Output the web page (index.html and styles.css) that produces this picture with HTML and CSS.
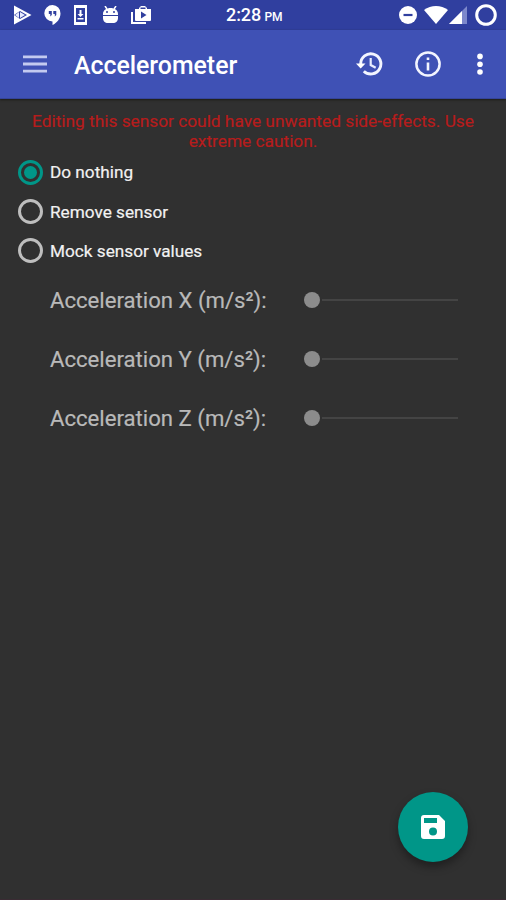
FILE: index.html
```html
<!DOCTYPE html>
<html lang="en">
<head>
<meta charset="utf-8">
<title>Accelerometer</title>
<link rel="stylesheet" href="styles.css">
</head>
<body>
<div class="screen">
  <header class="status">
    <div class="notifications">
      <svg width="19" height="20" viewBox="0 0 19 20"><path d="M1 0.5 18.500 10 1 19.500z" fill="#fff"/><path d="M1 10 7 6l7 4-7 4z" fill="#303f9f"/><path d="M2 10l4-3v6zM7 7l5 3-5 3z" fill="#e8ebff"/></svg>
      <svg width="17" height="20" viewBox="0 0 17 20"><path d="M8.500 0a8.200 8.200 0 0 0 0 16.400V20c4.500-2 8-6.500 8-11.500A8.200 8.200 0 0 0 8.500 0z" fill="#fff"/><path d="M4.800 6h3v4l-1.500 1.500V9H4.800zM9.300 6h3v4l-1.500 1.500V9H9.300z" fill="#303f9f"/></svg>
      <svg width="15" height="20" viewBox="0 0 15 20"><path fill-rule="evenodd" d="M1 0h13v20H1zM3 3v14h9V3z" fill="#fff"/><path d="M6.500 5h2v4h2l-3 3-3-3h2zM4.500 13h6v1.500h-6z" fill="#fff"/></svg>
      <svg class="android" width="17" height="18" viewBox="0 0 17 18"><path d="M3 0l2 3M14 0l-2 3" stroke="#fff" stroke-width="1.500"/><path d="M1 8c0-8 15-8 15 0v1H1zM1 10h15v2c0 3-2 5-5 5H6c-3 0-5-2-5-5z" fill="#fff"/><circle cx="5" cy="6" r="1" fill="#303f9f"/><circle cx="12" cy="6" r="1" fill="#303f9f"/></svg>
      <svg width="20" height="18" viewBox="0 0 20 18"><path d="M1 6v11h14" fill="none" stroke="#fff" stroke-width="2"/><path fill-rule="evenodd" d="M4 3h4V2l2-2h4l2 2v1h4v11a1 1 0 0 1-1 1H5a1 1 0 0 1-1-1zM9.500 3h5V1.600h-5zM10 5.500v7l5.500-3.500z" fill="#fff"/></svg>
    </div>
    <div class="clock">2:28 <span class="meridiem">PM</span></div>
    <div class="indicators">
      <svg width="18" height="18" viewBox="0 0 18 18"><circle cx="9" cy="9" r="9" fill="#fff"/><path d="M4.500 9h9" stroke="#303f9f" stroke-width="2.200"/></svg>
      <svg class="wifi" width="24" height="18" viewBox="0 0 24 18"><path d="M0 4C7-1.300 17-1.300 24 4L12 18z" fill="#fff"/></svg>
      <svg class="signal" width="18" height="18" viewBox="0 0 18 18"><path d="M18 0v18H0z" fill="#7d88cb"/><path d="M13 5v13H0z" fill="#fff"/></svg>
      <svg class="battery" width="22" height="22" viewBox="0 0 22 22"><circle cx="11" cy="11" r="9.300" fill="none" stroke="#fff" stroke-width="3"/></svg>
    </div>
  </header>
  <nav class="toolbar">
    <svg class="menu" width="24" height="18" viewBox="0 0 24 18"><path d="M0 1.800h24M0 9h24M0 16.200h24" stroke="#c3caf0" stroke-width="2.800"/></svg>
    <h1 class="title">Accelerometer</h1>
    <svg class="history" width="28" height="26" viewBox="0 0 28 26"><path d="M4.700 13A10.100 10.100 0 1 1 7.800 20.200" fill="none" stroke="#f3f5ff" stroke-width="2.900"/><path d="M0 12.500h9.500L4.700 17.500z" fill="#fff"/><path d="M14.700 7v7l5 2.800" fill="none" stroke="#e8ecff" stroke-width="2.200"/></svg>
    <svg class="info" width="26" height="26" viewBox="0 0 26 26"><circle cx="13" cy="13" r="11.600" fill="none" stroke="#f3f5ff" stroke-width="2.500"/><path d="M13 6.500v2.600M13 11.500v8" stroke="#f3f5ff" stroke-width="2.600"/></svg>
    <svg class="more" width="6" height="22" viewBox="0 0 6 22"><g fill="#fff"><circle cx="3" cy="3.400" r="2.800"/><circle cx="3" cy="11.200" r="2.800"/><circle cx="3" cy="19" r="2.800"/></g></svg>
  </nav>
  <main class="content">
    <p class="warning"><span class="line">Editing this sensor could have unwanted side-effects. Use</span> <span class="line">extreme caution.</span></p>
    <div class="options">
      <label class="option"><span class="radio checked"></span><span class="name">Do nothing</span></label>
      <label class="option"><span class="radio"></span><span class="name">Remove sensor</span></label>
      <label class="option"><span class="radio"></span><span class="name">Mock sensor values</span></label>
    </div>
    <div class="sliders">
      <div class="row"><span class="label">Acceleration X (m/s²):</span><span class="slider"><span class="thumb"></span><span class="track"></span></span></div>
      <div class="row"><span class="label">Acceleration Y (m/s²):</span><span class="slider"><span class="thumb"></span><span class="track"></span></span></div>
      <div class="row"><span class="label">Acceleration Z (m/s²):</span><span class="slider"><span class="thumb"></span><span class="track"></span></span></div>
    </div>
  </main>
  <button class="fab" aria-label="Save"><svg width="24" height="24" viewBox="0 0 24 24"><path fill-rule="evenodd" d="M3 0h15l6 6v15a3 3 0 0 1-3 3H3a3 3 0 0 1-3-3V3a3 3 0 0 1 3-3zM3 3v5h13V3zM12 12.500a4 4 0 1 0 0 8 4 4 0 0 0 0-8z" fill="#fff"/></svg></button>
</div>
</body>
</html>
```
FILE: styles.css
```css
* { box-sizing: border-box; }
body { margin: 0; font-family: Roboto, "Liberation Sans", sans-serif; }
svg { display: block; flex: none; }
.screen { position: relative; width: 506px; height: 900px; background: #303030; overflow: hidden; border-bottom: 1px solid #3a2b33; }
.status { height: 30px; background: #303f9f; display: flex; align-items: center; color: #fff; }
.notifications { display: flex; align-items: center; gap: 12px; padding-left: 13px; width: 226px; }
.android { margin-left: 2px; }
.clock { font-size: 18px; font-weight: 500; line-height: 30px; width: 173px; white-space: nowrap; padding-top: 2px; letter-spacing: -.1px; }
.meridiem { font-size: 12px; margin-left: -1px; }
.indicators { display: flex; align-items: center; }
.wifi { margin-left: 7px; }
.signal { margin-left: 1px; }
.battery { margin-left: 8px; }
.toolbar { height: 69px; background: #3f51b5; display: flex; align-items: center; padding-left: 23px; border-bottom: 1px solid #35449a; box-shadow: 0 1px 2px #1d1d16; position: relative; }
.title { margin: 3px 0 0 27px; width: 282px; font-size: 24.85px; font-weight: 500; color: #fff; line-height: 30px; }
.info { margin-left: 31px; }
.more { margin-left: 36px; }
.content { padding-top: 12px; }
.warning { margin: 0; text-align: center; color: #b71c1c; font-size: 17.3px; line-height: 20px; -webkit-text-stroke: .2px; }
.line { display: block; white-space: nowrap; }
.options { padding: 1.6px 0 0 17.5px; }
.option { display: flex; align-items: center; gap: 7.5px; height: 39.3px; color: #f2f2f2; font-size: 17.2px; -webkit-text-stroke: .2px; }
.radio { width: 25px; height: 25px; border: 3px solid #bebebe; border-radius: 50%; display: grid; place-items: center; }
.checked { border-color: #009688; }
.checked::after { content: ""; width: 13px; height: 13px; border-radius: 50%; background: #009688; }
.sliders { padding: .5px 0 0 50px; }
.row { height: 59px; display: flex; align-items: center; color: #b9b9b9; font-size: 22.15px; -webkit-text-stroke: .2px; }
.label { width: 254px; white-space: nowrap; padding-bottom: 1px; }
.slider { display: flex; align-items: center; width: 154px; }
.thumb { width: 16px; height: 16px; border-radius: 50%; background: #8c8c8c; }
.track { flex: 1; height: 2px; background: #444; margin-left: 2px; }
.fab { position: absolute; left: 398px; top: 792px; width: 70px; height: 70px; border: 0; border-radius: 50%; background: #009688; display: grid; place-items: center; padding: 0; box-shadow: 0 5px 9px rgba(0,0,0,.35); }
```
